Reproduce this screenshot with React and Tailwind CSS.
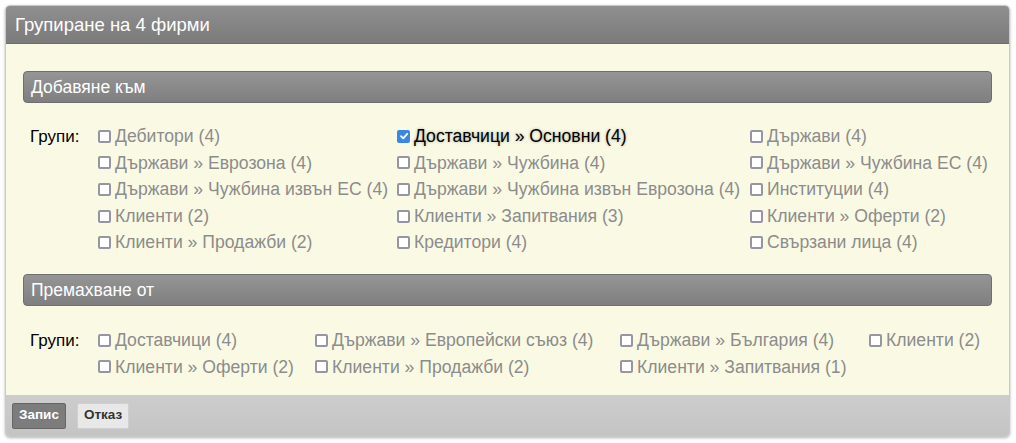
import React, { useState } from 'react';

const addGroups = [
  ['Дебитори (4)', 'Доставчици » Основни (4)', 'Държави (4)'],
  ['Държави » Еврозона (4)', 'Държави » Чужбина (4)', 'Държави » Чужбина ЕС (4)'],
  ['Държави » Чужбина извън ЕС (4)', 'Държави » Чужбина извън Еврозона (4)', 'Институции (4)'],
  ['Клиенти (2)', 'Клиенти » Запитвания (3)', 'Клиенти » Оферти (2)'],
  ['Клиенти » Продажби (2)', 'Кредитори (4)', 'Свързани лица (4)'],
];

const removeGroups = [
  ['Доставчици (4)', 'Държави » Европейски съюз (4)', 'Държави » България (4)', 'Клиенти (2)'],
  ['Клиенти » Оферти (2)', 'Клиенти » Продажби (2)', 'Клиенти » Запитвания (1)', ''],
];

function Check({ label, checked, onToggle }) {
  if (!label) return <div />;
  return (
    <label className="flex items-center gap-[4px] h-[26.6px] whitespace-nowrap cursor-pointer" onClick={onToggle}>
      {checked ? (
        <span className="w-[13px] h-[13px] rounded-[2px] bg-[#3b87e6] flex items-center justify-center shrink-0">
          <svg width="10" height="10" viewBox="0 0 10 10">
            <path d="M2 5.2 L4.2 7.3 L8.2 2.8" stroke="white" strokeWidth="1.8" fill="none" strokeLinecap="round" strokeLinejoin="round" />
          </svg>
        </span>
      ) : (
        <span className="w-[13px] h-[13px] rounded-[2px] border-2 border-[#9696a2] bg-white shrink-0" />
      )}
      <span className={checked ? 'text-black [text-shadow:0_0_3px_rgba(0,0,0,0.35)]' : 'text-[#8c8c8c]'}>{label}</span>
    </label>
  );
}

function SectionHeader({ title }) {
  return (
    <div className="h-[32px] rounded-[4px] border border-[#6f6f6f] bg-gradient-to-b from-[#959595] to-[#7f7f7f] flex items-center px-[7px] text-white text-[17.5px]">
      {title}
    </div>
  );
}

export default function App() {
  const [checked, setChecked] = useState({ 'add:Доставчици » Основни (4)': true });
  const toggle = (key) => setChecked(c => ({ ...c, [key]: !c[key] }));

  return (
    <div className="w-[1016px] h-[443px] bg-white pt-[5px] pl-[5px] font-['Liberation_Sans',Arial,sans-serif]">
      <div className="w-[1005px] h-[432px] rounded-[5px] border border-[#c9c9c9] shadow-[0_1px_3px_rgba(0,0,0,0.3)] overflow-hidden flex flex-col bg-[#fafae4]">
        <div className="h-[38px] shrink-0 bg-gradient-to-b from-[#8f8f8f] to-[#7b7b7b] border-b border-[#6d6d6d] flex items-center px-[9px] text-white text-[18.5px]">
          Групиране на 4 фирми
        </div>

        <div className="flex-1 px-[17px] pt-[27px] text-[17.6px]">
          <SectionHeader title="Добавяне към" />
          <div className="flex pt-[20px] pl-[7px]">
            <div className="w-[68px] h-[26.6px] flex items-center text-black text-[17px]">Групи:</div>
            <div className="grid grid-cols-[299px_353px_auto]">
              {addGroups.flat().map((g, i) => (
                <Check key={i} label={g} checked={!!checked['add:' + g]} onToggle={() => toggle('add:' + g)} />
              ))}
            </div>
          </div>

          <div className="mt-[18px]">
            <SectionHeader title="Премахване от" />
          </div>
          <div className="flex pt-[21px] pl-[7px]">
            <div className="w-[68px] h-[26.6px] flex items-center text-black text-[17px]">Групи:</div>
            <div className="grid grid-cols-[217px_305px_249px_auto]">
              {removeGroups.flat().map((g, i) => (
                <Check key={i} label={g} checked={!!checked['rem:' + g]} onToggle={() => toggle('rem:' + g)} />
              ))}
            </div>
          </div>
        </div>

        <div className="h-[41px] shrink-0 bg-gradient-to-b from-[#cdcdcd] to-[#c4c4c4] flex items-center gap-[11px] px-[6px]">
          <button className="h-[26px] px-[6px] rounded-[2px] border border-[#666] bg-[#7c7c7c] text-white text-[13.5px] font-bold">
            Запис
          </button>
          <button className="h-[26px] px-[6px] rounded-[2px] border border-[#d0d0d0] bg-[#e8e8e8] text-[#333] text-[13.5px] font-bold">
            Отказ
          </button>
        </div>
      </div>
    </div>
  );
}
